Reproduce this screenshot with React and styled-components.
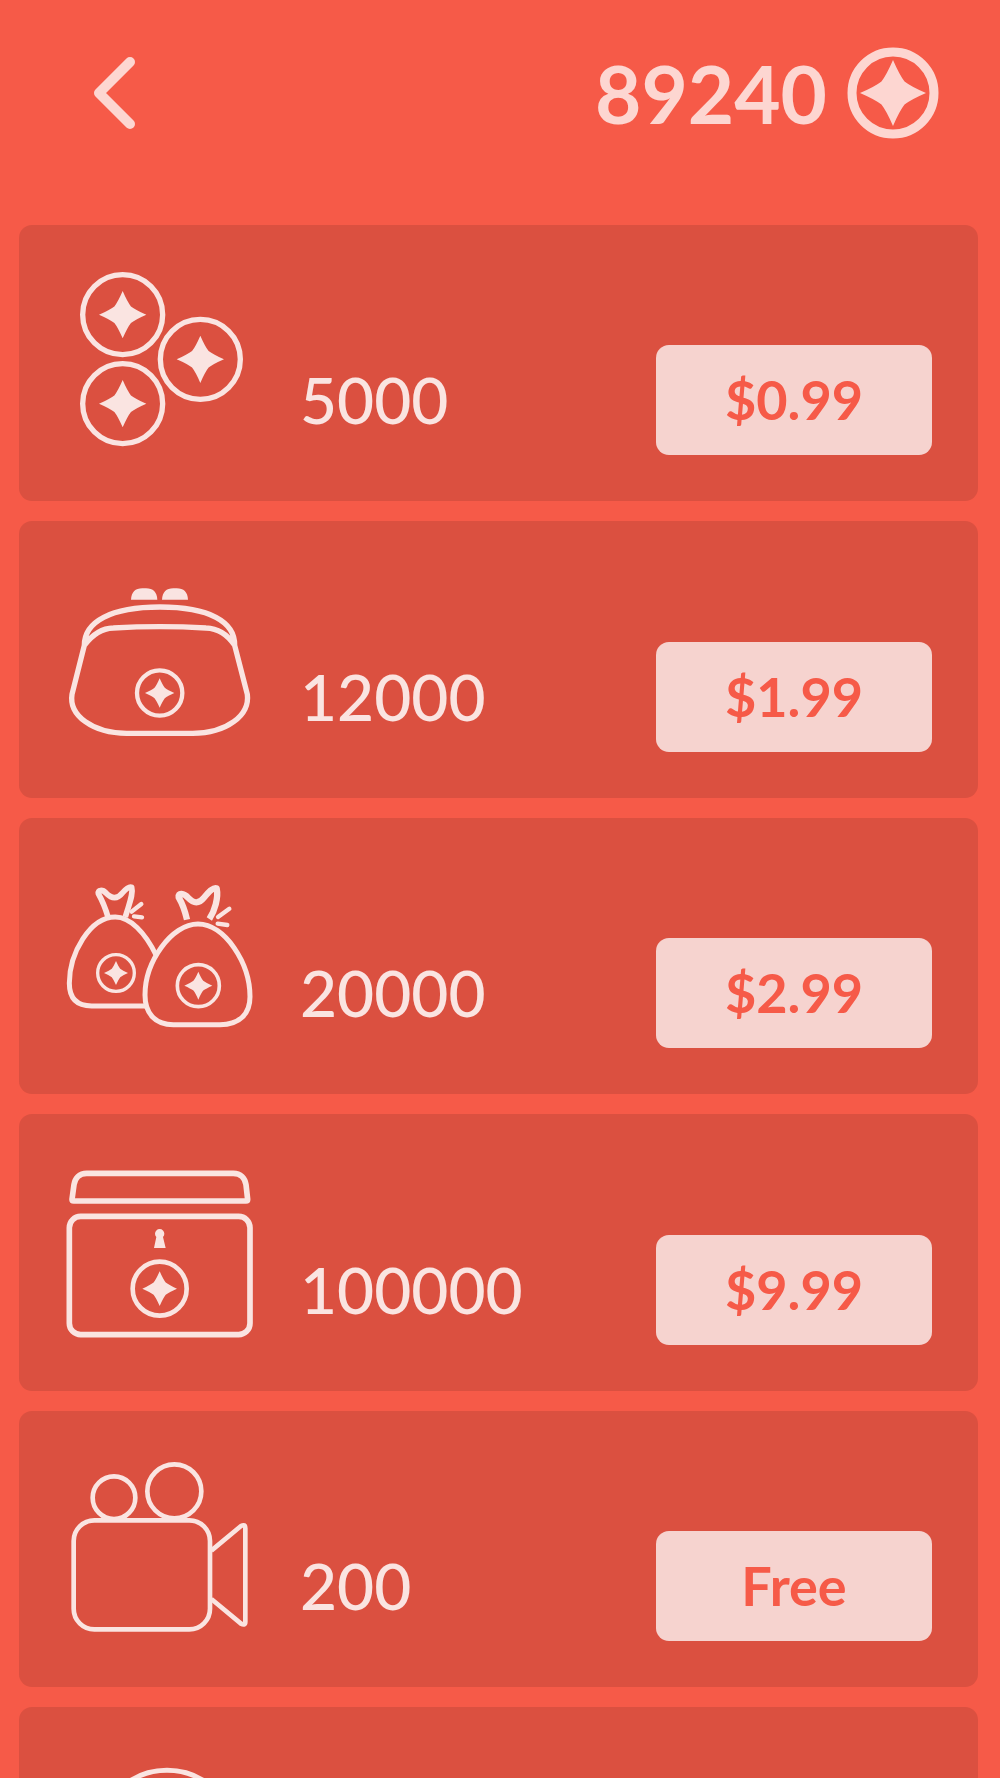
import React from "react";
import styled, { createGlobalStyle } from "styled-components";

const GlobalStyle = createGlobalStyle`
  * {
    box-sizing: border-box;
  }
  body {
    margin: 0;
    background: #f65a48;
    font-family: Lato, "Open Sans", sans-serif;
  }
`;

const Screen = styled.main`
  display: flex;
  flex-direction: column;
  height: 100vh;
  background: #f65a48;
`;

const Header = styled.header`
  display: flex;
  flex: none;
  align-items: center;
  justify-content: space-between;
  padding: 45px 61px 84px 81px;
`;

const BackButton = styled.button`
  display: flex;
  padding: 8px;
  border: 0;
  background: none;
  color: #fdd6d1;
  cursor: pointer;
`;

const Balance = styled.div`
  display: flex;
  align-items: center;
  gap: 20px;
  color: #fdd6d1;
  font-size: 80px;
  font-weight: 700;
  line-height: 96px;
`;

const OfferList = styled.ul`
  display: flex;
  flex: 1;
  flex-direction: column;
  gap: 20px;
  min-height: 0;
  margin: 0;
  padding: 0 22px 20px 19px;
  overflow-y: auto;
  scrollbar-width: none;
  list-style: none;
`;

const Card = styled.li`
  display: flex;
  flex: none;
  gap: 30px;
  aspect-ratio: 111 / 32;
  padding: 25px 46px 31px 31px;
  border-radius: 13px;
  background: #db5040;
  color: #fae4e1;
`;

const Art = styled.svg`
  flex: none;
  width: 220px;
  height: 220px;
  fill: none;
  stroke: currentColor;
  stroke-width: ${(props) => props.$line}px;
  stroke-linejoin: round;
`;

const Line = styled.path`
  stroke-width: ${(props) => props.$line}px;
  stroke-linecap: ${(props) => props.$cap || "butt"};
`;

const Ring = styled.circle`
  stroke-width: ${(props) => props.$line}px;
`;

const Offer = styled.div`
  display: flex;
  flex: 1;
  align-items: center;
  align-self: flex-end;
  justify-content: space-between;
  margin-bottom: 15px;
`;

const Amount = styled.span`
  font-size: 64px;
  font-weight: 500;
  line-height: 80px;
`;

const BuyButton = styled.button`
  width: 276px;
  height: 110px;
  padding: 0;
  border: 0;
  border-radius: 13px;
  background: #f6d3cf;
  color: #f65a48;
  font-family: inherit;
  font-size: 54px;
  font-weight: 700;
  line-height: 64px;
  cursor: pointer;
`;

function Star({ x, y, size }) {
  return (
    <path
      transform={`translate(${x} ${y}) scale(${size / 100})`}
      d="M0-100Q20-54 35-35Q54-20 100 0Q54 20 35 35Q20 54 0 100Q-20 54-35 35Q-54 20-100 0Q-54-20-35-35Q-20-54 0-100Z"
      fill="currentColor"
      stroke="none"
    />
  );
}

function Coin({ x, y, r, star, line }) {
  return (
    <>
      <Ring cx={x} cy={y} r={r} $line={line} />
      <Star x={x} y={y} size={star} />
    </>
  );
}

function CoinsArt() {
  return (
    <Art viewBox="0 0 660 660" $line={16} aria-hidden="true">
      <Coin x={218} y={194} r={120} star={71} line={16} />
      <Coin x={451} y={328} r={120} star={71} line={16} />
      <Coin x={218} y={461} r={120} star={71} line={16} />
    </Art>
  );
}

function PurseArt() {
  return (
    <Art viewBox="0 -70 660 660" $line={16} aria-hidden="true">
      <path
        d="M243 91Q245 57 277 57H288Q320 57 322 91ZM336 91Q338 57 370 57H380Q412 57 414 91Z"
        fill="currentColor"
        stroke="none"
      />
      <path d="M103 228C103 157 182 113 330 113C478 113 555 157 554 228L592 375C600 438 530 492 428 492H230C128 492 56 438 66 375L103 228C130 192 160 177 190 176Q330 168 468 176C500 177 530 192 554 228" />
      <Coin x={329} y={371} r={68} star={44} line={13} />
    </Art>
  );
}

function BagsArt() {
  return (
    <Art viewBox="0 -66 660 660" $line={15} aria-hidden="true">
      <path d="M318 270C285 202 240 156 196 156C120 156 58 265 58 355C58 400 80 423 125 423H286" />
      <path d="M444 177C365 177 285 290 285 390C285 445 315 479 370 479H510C570 479 600 445 600 395C600 295 525 177 444 177Z" />
      <Line
        $line={17}
        d="M174 156Q162 116 145 86C142 74 158 73 168 84Q195 112 217 84Q236 62 245 67C251 88 236 120 226 156"
      />
      <Line
        $line={19}
        d="M411 164Q402 124 386 97C383 82 402 84 414 98Q440 126 462 98Q488 64 500 70C506 98 494 138 478 162"
      />
      <Line
        $line={13}
        $cap="round"
        d="M245 140L274 117M252 154L276 157M504 156L538 131M503 176L532 180"
      />
      <Coin x={198} y={324} r={55} star={36} line={10} />
      <Coin x={445} y={362} r={63} star={42} line={11} />
    </Art>
  );
}

function ChestArt() {
  return (
    <Art viewBox="0 -47 660 660" $line={17} aria-hidden="true">
      <path d="M110 56H550C572 56 585 70 588 90L593 134Q593 139 588 139H71Q66 139 66 134L72 90C75 70 88 56 110 56Z" />
      <rect x="58" y="185" width="542" height="355" rx="34" />
      <path
        d="M319 247A14 14 0 1 1 339 247L347 280H312Z"
        fill="currentColor"
        stroke="none"
      />
      <Coin x={329} y={402} r={81} star={52} line={14} />
    </Art>
  );
}

function CameraArt() {
  return (
    <Art viewBox="0 -27 660 660" $line={14} aria-hidden="true">
      <circle cx="192" cy="158" r="64" />
      <circle cx="373" cy="139" r="81" />
      <rect x="71" y="226" width="409" height="327" rx="62" />
      <path d="M484 317L573 243Q586 236 586 250V530Q586 543 573 536L484 462" />
    </Art>
  );
}

function RingArt() {
  return (
    <Art viewBox="0 0 660 660" $line={15} aria-hidden="true">
      <circle cx="351" cy="322" r="207" />
    </Art>
  );
}

const offers = [
  { amount: "5000", price: "$0.99", Picture: CoinsArt },
  { amount: "12000", price: "$1.99", Picture: PurseArt },
  { amount: "20000", price: "$2.99", Picture: BagsArt },
  { amount: "100000", price: "$9.99", Picture: ChestArt },
  { amount: "200", price: "Free", Picture: CameraArt },
  { Picture: RingArt },
];

function App() {
  return (
    <>
      <GlobalStyle />
      <Screen>
        <Header>
          <BackButton type="button" aria-label="Back">
            <svg width="50" height="80" viewBox="0 0 50 80" fill="none" aria-hidden="true">
              <path
                d="M41 9L10 40L41 71"
                stroke="currentColor"
                strokeWidth="10"
                strokeLinecap="round"
                strokeLinejoin="round"
              />
            </svg>
          </BackButton>
          <Balance>
            <span>89240</span>
            <svg
              width="92"
              height="92"
              viewBox="0 0 92 92"
              fill="none"
              stroke="currentColor"
              aria-hidden="true"
            >
              <Coin x={46} y={46} r={41} star={33} line={9} />
            </svg>
          </Balance>
        </Header>
        <OfferList>
          {offers.map(({ amount, price, Picture }, index) => (
            <Card key={index}>
              <Picture />
              {amount && (
                <Offer>
                  <Amount id={`amount-${amount}`}>{amount}</Amount>
                  <BuyButton type="button" aria-describedby={`amount-${amount}`}>
                    {price}
                  </BuyButton>
                </Offer>
              )}
            </Card>
          ))}
        </OfferList>
      </Screen>
    </>
  );
}

export default App;
